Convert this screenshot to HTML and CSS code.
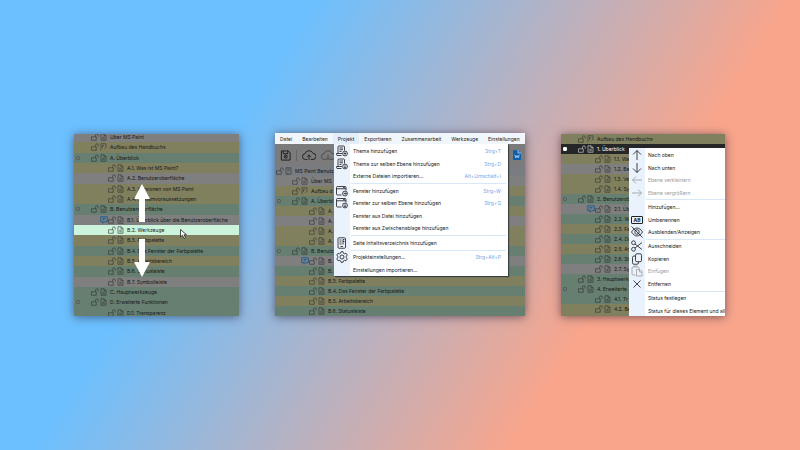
FILE: index.html
```html
<!DOCTYPE html>
<html lang="de">
<head>
<meta charset="utf-8">
<meta name="viewport" content="width=device-width, initial-scale=1">
<title>MS Paint Benutzerhandbuch</title>
<link rel="stylesheet" href="styles.css">
</head>
<body>
<svg class="sprite" aria-hidden="true">
  <symbol id="lock" viewBox="0 0 16 16"><path d="M1 7.500h9.500v7H1zM9 7V4.500a2.800 2.800 0 0 1 5.600 0V7"/></symbol>
  <symbol id="doc" viewBox="0 0 14 16"><path d="M2 1.500h6.500l3.500 3.500v9.500H2zM8 2v3.500h4M4.500 8.500h5M4.500 11.500h5"/></symbol>
  <symbol id="page" viewBox="0 0 14 16"><path d="M2 14.500v-13h10v7l-3 3M5 5v5M5 5h3"/></symbol>
  <symbol id="book" viewBox="0 0 14 16"><path d="M2 1.500h10v13H2zM4.500 4h5M4.500 7h5M4.500 12h3"/></symbol>
  <symbol id="note" viewBox="0 0 16 16"><path d="M1.500 1.500h13v10H9l-3 3v-3H1.500zM5 5h6M5 8h4"/></symbol>
  <symbol id="topic" viewBox="0 0 24 24"><path d="M11 21H4a2.500 2.500 0 0 1-3-2.500V17h11M4 17V4a2 2 0 0 1 2-2h9a2 2 0 0 1 2 2v7M7 6h7M7 9.500h7M7 13h4"/><circle cx="18" cy="17" r="4.800"/><path d="M18 14.500v5M15.500 17h5"/></symbol>
  <symbol id="topic-level" viewBox="0 0 24 24"><path d="M11 21H4a2.500 2.500 0 0 1-3-2.500V17h11M4 17V4a2 2 0 0 1 2-2h9a2 2 0 0 1 2 2v7M7 6h7M7 9.500h7M7 13h4"/><circle cx="18" cy="17" r="4.800"/><path d="M18 14.500v5M16 17.500l2 2 2-2"/></symbol>
  <symbol id="window" viewBox="0 0 24 24"><path d="M11 20H3a2 2 0 0 1-2-2V5a2 2 0 0 1 2-2h15a2 2 0 0 1 2 2v6M1 7.500h19M14 5.300h4"/><circle cx="18" cy="17" r="4.800"/><path d="M15.500 17h5l-2-2M20.500 17l-2 2"/></symbol>
  <symbol id="window-level" viewBox="0 0 24 24"><path d="M11 20H3a2 2 0 0 1-2-2V5a2 2 0 0 1 2-2h15a2 2 0 0 1 2 2v6M1 7.500h19M14 5.300h4"/><circle cx="18" cy="17" r="4.800"/><path d="M18 14.500v5l-2-2M18 19.500l2-2"/></symbol>
  <symbol id="toc" viewBox="0 0 24 24"><rect x="4" y="1.500" width="15" height="21" rx="2"/><path d="M7 6h4M7 10h4M7 14h4M14 5v10M14 5h3M14 9h3M9 19h5"/></symbol>
  <symbol id="gear" viewBox="0 0 24 24"><path d="M10 1.500h4l1 3 2 1 3-1 2.500 3.500-2 2.500v3l2 2.500-2.500 3.500-3-1-2 1-1 3h-4l-1-3-2-1-3 1L1.500 16l2-2.500v-3l-2-2.500L4 4.500l3 1 2-1z"/><circle cx="12" cy="12" r="4"/></symbol>
  <symbol id="up" viewBox="0 0 24 24"><path d="M12 22V3M4 11l8-8 8 8"/></symbol>
  <symbol id="down" viewBox="0 0 24 24"><path d="M12 2v19M4 13l8 8 8-8"/></symbol>
  <symbol id="left" viewBox="0 0 24 24"><path d="M22 12H3M10 5l-7 7 7 7"/></symbol>
  <symbol id="right" viewBox="0 0 24 24"><path d="M2 12h19M14 5l7 7-7 7"/></symbol>
  <symbol id="hide" viewBox="0 0 24 24"><path d="M1 12c3-5 7-8 11-8s8 3 11 8c-3 5-7 8-11 8s-8-3-11-8zM1 1l22 22"/><circle cx="12" cy="12" r="4.500"/></symbol>
  <symbol id="cut" viewBox="0 0 24 24"><circle cx="5" cy="5.500" r="3.800"/><circle cx="5" cy="18.500" r="3.800"/><path d="M8 8l14 11M8 16L22 5"/></symbol>
  <symbol id="copy" viewBox="0 0 24 24"><rect x="9" y="1.500" width="12" height="16" rx="3"/><path d="M9 6H6a3 3 0 0 0-3 3v10.500a3 3 0 0 0 3 3h6a3 3 0 0 0 3-3v-2"/></symbol>
  <symbol id="paste" viewBox="0 0 24 24"><path d="M9 20H4a2 2 0 0 1-2-2V6a2 2 0 0 1 2-2h10a2 2 0 0 1 2 2v2M6 4V2h6v2M11 9h7l4 4v9H11zM17 9v5h5"/></symbol>
  <symbol id="cross" viewBox="0 0 24 24"><path d="M5 5l14 14M19 5L5 19"/></symbol>
  <symbol id="save" viewBox="0 0 24 24"><path d="M3 2h15l4 4v16H3zM7 2v6h10V2"/><circle cx="12.500" cy="14.500" r="3.500"/><path d="M12.500 12v4"/></symbol>
  <symbol id="cloud-up" viewBox="0 0 32 24"><path d="M12 21H8a6.500 6.500 0 0 1-1-13 9.500 9.500 0 0 1 18-1 7 7 0 0 1 0 14h-5M16 22V11M11.500 15l4.500-4.500 4.500 4.500"/></symbol>
  <symbol id="cloud-down" viewBox="0 0 32 24"><path d="M12 21H8a6.500 6.500 0 0 1-1-13 9.500 9.500 0 0 1 18-1 7 7 0 0 1 0 14h-5M16 10v11M11.500 17l4.500 4.500 4.500-4.500"/></symbol>
</svg>

<main class="stage">
  <section class="panel">
    <ul class="tree tree-drag">
      <li class="row l1 gray"><svg class="ic"><use href="#lock"/></svg><svg class="ic doc"><use href="#doc"/></svg><span>Über MS Paint</span></li>
      <li class="row l1 olive"><svg class="ic"><use href="#lock"/></svg><svg class="ic doc"><use href="#page"/></svg><span>Aufbau des Handbuchs</span></li>
      <li class="row l1 green"><button class="toggle" aria-label="Einklappen"></button><svg class="ic"><use href="#lock"/></svg><svg class="ic doc"><use href="#doc"/></svg><span>A. Überblick</span></li>
      <li class="row l2 olive"><svg class="ic"><use href="#lock"/></svg><svg class="ic doc"><use href="#doc"/></svg><span>A.1. Was ist MS Paint?</span></li>
      <li class="row l2 gray"><svg class="ic"><use href="#lock"/></svg><svg class="ic doc"><use href="#doc"/></svg><span>A.2. Benutzeroberfläche</span></li>
      <li class="row l2 olive"><svg class="ic"><use href="#lock"/></svg><svg class="ic doc"><use href="#doc"/></svg><span>A.3. Versionen von MS Paint</span></li>
      <li class="row l2 olive"><svg class="ic"><use href="#lock"/></svg><svg class="ic doc"><use href="#doc"/></svg><span>A.4. Systemvoraussetzungen</span></li>
      <li class="row l1 green"><button class="toggle" aria-label="Einklappen"></button><svg class="ic"><use href="#lock"/></svg><svg class="ic doc"><use href="#doc"/></svg><span>B. Benutzeroberfläche</span></li>
      <li class="row l2 noted gray"><svg class="ic note"><use href="#note"/></svg><svg class="ic"><use href="#lock"/></svg><svg class="ic doc"><use href="#doc"/></svg><span>B.1. Überblick über die Benutzeroberfläche</span></li>
      <li class="row l2 active"><svg class="ic"><use href="#lock"/></svg><svg class="ic doc"><use href="#doc"/></svg><span>B.2. Werkzeuge</span></li>
      <li class="row l2 olive"><svg class="ic"><use href="#lock"/></svg><svg class="ic doc"><use href="#doc"/></svg><span>B.3. Farbpalette</span></li>
      <li class="row l2 green"><svg class="ic"><use href="#lock"/></svg><svg class="ic doc"><use href="#doc"/></svg><span>B.4. Das Fenster der Farbpalette</span></li>
      <li class="row l2 olive"><svg class="ic"><use href="#lock"/></svg><svg class="ic doc"><use href="#doc"/></svg><span>B.5. Arbeitsbereich</span></li>
      <li class="row l2 green"><svg class="ic"><use href="#lock"/></svg><svg class="ic doc"><use href="#doc"/></svg><span>B.6. Statusleiste</span></li>
      <li class="row l2 gray"><svg class="ic"><use href="#lock"/></svg><svg class="ic doc"><use href="#doc"/></svg><span>B.7. Symbolleiste</span></li>
      <li class="row l1 green"><svg class="ic"><use href="#lock"/></svg><svg class="ic doc"><use href="#doc"/></svg><span>C. Hauptwerkzeuge</span></li>
      <li class="row l1 green"><button class="toggle" aria-label="Einklappen"></button><svg class="ic"><use href="#lock"/></svg><svg class="ic doc"><use href="#doc"/></svg><span>D. Erweiterte Funktionen</span></li>
      <li class="row l2 green"><svg class="ic"><use href="#lock"/></svg><svg class="ic doc"><use href="#doc"/></svg><span>D.1. Transparenz</span></li>
    </ul>
    <svg class="arrow arrow-up" viewBox="0 0 16 38"><path d="M8 0l8 15h-5v23H5V15H0z"/></svg>
    <svg class="arrow arrow-down" viewBox="0 0 16 38"><path d="M5 0h6v23h5L8 38 0 23h5z"/></svg>
    <svg class="cursor" viewBox="0 0 14 20"><path d="M1 1v15l4-3.500 3 6.500 3-1.500-3-6h5z"/></svg>
  </section>

  <section class="panel panel-main">
    <nav class="menubar">
      <button>Datei</button><button>Bearbeiten</button><button class="open">Projekt</button><button>Exportieren</button><button>Zusammenarbeit</button><button>Werkzeuge</button><button>Einstellungen</button>
    </nav>
    <div class="toolbar">
      <button class="tool" aria-label="Speichern"><svg><use href="#save"/></svg></button>
      <span class="divider"></span>
      <button class="tool wide" aria-label="Hochladen"><svg><use href="#cloud-up"/></svg></button>
      <button class="tool wide faint" aria-label="Herunterladen"><svg><use href="#cloud-down"/></svg></button>
      <button class="tool word" aria-label="Word"><svg viewBox="0 0 16 20"><path class="sheet" d="M2 0h8l6 6v12a2 2 0 0 1-2 2H2a2 2 0 0 1-2-2V2a2 2 0 0 1 2-2z"/><path class="mark" d="M10 0v6h6M3.500 9.500l2 6.500L8 11l2.500 5 2-6.500"/></svg></button>
    </div>
    <ul class="tree">
      <li class="row l0 slate"><svg class="ic"><use href="#lock"/></svg><svg class="ic doc"><use href="#book"/></svg><span>MS Paint Benutz</span></li>
      <li class="row l1 gray"><svg class="ic"><use href="#lock"/></svg><svg class="ic doc"><use href="#doc"/></svg><span>Über MS</span></li>
      <li class="row l1 olive"><svg class="ic"><use href="#lock"/></svg><svg class="ic doc"><use href="#page"/></svg><span>Aufbau d</span></li>
      <li class="row l1 green"><button class="toggle" aria-label="Einklappen"></button><svg class="ic"><use href="#lock"/></svg><svg class="ic doc"><use href="#doc"/></svg><span>A. Überbl</span></li>
      <li class="row l2 olive"><svg class="ic"><use href="#lock"/></svg><svg class="ic doc"><use href="#doc"/></svg><span>A.</span></li>
      <li class="row l2 gray"><svg class="ic"><use href="#lock"/></svg><svg class="ic doc"><use href="#doc"/></svg><span>A.</span></li>
      <li class="row l2 olive"><svg class="ic"><use href="#lock"/></svg><svg class="ic doc"><use href="#doc"/></svg><span>A.</span></li>
      <li class="row l2 olive"><svg class="ic"><use href="#lock"/></svg><svg class="ic doc"><use href="#doc"/></svg><span>A.</span></li>
      <li class="row l1 green"><button class="toggle" aria-label="Einklappen"></button><svg class="ic"><use href="#lock"/></svg><svg class="ic doc"><use href="#doc"/></svg><span>B. Benutz</span></li>
      <li class="row l2 noted gray"><svg class="ic note"><use href="#note"/></svg><svg class="ic"><use href="#lock"/></svg><svg class="ic doc"><use href="#doc"/></svg><span>B.</span></li>
      <li class="row l2 green"><svg class="ic"><use href="#lock"/></svg><svg class="ic doc"><use href="#doc"/></svg><span>B.</span></li>
      <li class="row l2 olive"><svg class="ic"><use href="#lock"/></svg><svg class="ic doc"><use href="#doc"/></svg><span>B.3. Farbpalette</span></li>
      <li class="row l2 green"><svg class="ic"><use href="#lock"/></svg><svg class="ic doc"><use href="#doc"/></svg><span>B.4. Das Fenster der Farbpalette</span></li>
      <li class="row l2 olive"><svg class="ic"><use href="#lock"/></svg><svg class="ic doc"><use href="#doc"/></svg><span>B.5. Arbeitsbereich</span></li>
      <li class="row l2 green"><svg class="ic"><use href="#lock"/></svg><svg class="ic doc"><use href="#doc"/></svg><span>B.6. Statusleiste</span></li>
    </ul>
    <div class="menu menu-project">
      <button class="item"><svg class="mi"><use href="#topic"/></svg><span>Thema hinzufügen</span><kbd>Strg+T</kbd></button>
      <button class="item"><svg class="mi"><use href="#topic-level"/></svg><span>Thema zur selben Ebene hinzufügen</span><kbd>Strg+D</kbd></button>
      <button class="item"><span>Externe Dateien importieren...</span><kbd>Alt+Umschalt+I</kbd></button>
      <hr>
      <button class="item"><svg class="mi"><use href="#window"/></svg><span>Fenster hinzufügen</span><kbd>Strg+W</kbd></button>
      <button class="item"><svg class="mi"><use href="#window-level"/></svg><span>Fenster zur selben Ebene hinzufügen</span><kbd>Strg+Q</kbd></button>
      <button class="item"><span>Fenster aus Datei hinzufügen</span></button>
      <button class="item"><span>Fenster aus Zwischenablage hinzufügen</span></button>
      <hr>
      <button class="item"><svg class="mi"><use href="#toc"/></svg><span>Seite Inhaltsverzeichnis hinzufügen</span></button>
      <hr>
      <button class="item"><svg class="mi"><use href="#gear"/></svg><span>Projekteinstellungen...</span><kbd>Strg+Alt+P</kbd></button>
      <button class="item"><span>Einstellungen importieren...</span></button>
    </div>
  </section>

  <section class="panel panel-context">
    <ul class="tree">
      <li class="row l1 olive"><svg class="ic"><use href="#lock"/></svg><svg class="ic doc"><use href="#page"/></svg><span>Aufbau des Handbuchs</span></li>
      <li class="row l1 selected"><button class="toggle" aria-label="Einklappen"></button><svg class="ic"><use href="#lock"/></svg><svg class="ic doc"><use href="#doc"/></svg><span>1. Überblick</span></li>
      <li class="row l2 olive"><svg class="ic"><use href="#lock"/></svg><svg class="ic doc"><use href="#doc"/></svg><span>1.1. Wa</span></li>
      <li class="row l2 gray"><svg class="ic"><use href="#lock"/></svg><svg class="ic doc"><use href="#doc"/></svg><span>1.2. Be</span></li>
      <li class="row l2 olive"><svg class="ic"><use href="#lock"/></svg><svg class="ic doc"><use href="#doc"/></svg><span>1.3. Ve</span></li>
      <li class="row l2 olive"><svg class="ic"><use href="#lock"/></svg><svg class="ic doc"><use href="#doc"/></svg><span>1.4. Sy</span></li>
      <li class="row l1 green"><button class="toggle" aria-label="Einklappen"></button><svg class="ic"><use href="#lock"/></svg><svg class="ic doc"><use href="#doc"/></svg><span>2. Benutzerob</span></li>
      <li class="row l2 noted gray"><svg class="ic note"><use href="#note"/></svg><svg class="ic"><use href="#lock"/></svg><svg class="ic doc"><use href="#doc"/></svg><span>2.1. Üb</span></li>
      <li class="row l2 green"><svg class="ic"><use href="#lock"/></svg><svg class="ic doc"><use href="#doc"/></svg><span>2.2. W</span></li>
      <li class="row l2 olive"><svg class="ic"><use href="#lock"/></svg><svg class="ic doc"><use href="#doc"/></svg><span>2.3. Fa</span></li>
      <li class="row l2 green"><svg class="ic"><use href="#lock"/></svg><svg class="ic doc"><use href="#doc"/></svg><span>2.4. Da</span></li>
      <li class="row l2 olive"><svg class="ic"><use href="#lock"/></svg><svg class="ic doc"><use href="#doc"/></svg><span>2.5. Ar</span></li>
      <li class="row l2 green"><svg class="ic"><use href="#lock"/></svg><svg class="ic doc"><use href="#doc"/></svg><span>2.6. St</span></li>
      <li class="row l2 gray"><svg class="ic"><use href="#lock"/></svg><svg class="ic doc"><use href="#doc"/></svg><span>2.7. Sy</span></li>
      <li class="row l1 green"><svg class="ic"><use href="#lock"/></svg><svg class="ic doc"><use href="#doc"/></svg><span>3. Hauptwerk</span></li>
      <li class="row l1 green"><button class="toggle" aria-label="Einklappen"></button><svg class="ic"><use href="#lock"/></svg><svg class="ic doc"><use href="#doc"/></svg><span>4. Erweiterte</span></li>
      <li class="row l2 green"><svg class="ic"><use href="#lock"/></svg><svg class="ic doc"><use href="#doc"/></svg><span>4.1. Tr</span></li>
      <li class="row l2 olive"><svg class="ic"><use href="#lock"/></svg><svg class="ic doc"><use href="#doc"/></svg><span>4.2. Be</span></li>
    </ul>
    <div class="menu menu-context">
      <button class="item"><svg class="mi"><use href="#up"/></svg><span>Nach oben</span></button>
      <button class="item"><svg class="mi"><use href="#down"/></svg><span>Nach unten</span></button>
      <button class="item" disabled><svg class="mi"><use href="#left"/></svg><span>Ebene verkleinern</span></button>
      <button class="item" disabled><svg class="mi"><use href="#right"/></svg><span>Ebene vergrößern</span></button>
      <hr>
      <button class="item"><span>Hinzufügen...</span></button>
      <button class="item"><span class="mi rename">AB</span><span>Umbenennen</span></button>
      <button class="item"><svg class="mi"><use href="#hide"/></svg><span>Ausblenden/Anzeigen</span></button>
      <hr>
      <button class="item"><svg class="mi"><use href="#cut"/></svg><span>Ausschneiden</span></button>
      <button class="item"><svg class="mi"><use href="#copy"/></svg><span>Kopieren</span></button>
      <button class="item" disabled><svg class="mi"><use href="#paste"/></svg><span>Einfügen</span></button>
      <button class="item"><svg class="mi"><use href="#cross"/></svg><span>Entfernen</span></button>
      <hr>
      <button class="item"><span>Status festlegen</span></button>
      <button class="item"><span>Status für dieses Element und all</span></button>
    </div>
  </section>
</main>
</body>
</html>
```
FILE: styles.css
```css
* { box-sizing: border-box; }

body {
  margin: 0;
  font: 5px/8px Inter, "Noto Sans", sans-serif;
  color: #181818;
  background: linear-gradient(122deg, #6cc0ff 29%, #f8a58c 73%) fixed;
}

button {
  margin: 0;
  padding: 0;
  border: 0;
  background: none;
  color: inherit;
  font: inherit;
  text-align: left;
}

svg { fill: none; stroke: currentColor; }

.sprite { position: absolute; width: 0; height: 0; }

.stage {
  display: grid;
  grid-template-columns: 165fr 250fr 164fr;
  gap: 36px;
  align-content: center;
  align-items: end;
  min-height: 100vh;
  padding: 0 75px 0 74px;
}

.panel {
  position: relative;
  height: 182px;
  overflow: hidden;
  background: #7e7e7e;
  box-shadow: 0 1px 9px rgba(40, 30, 50, .6);
}

.panel-main { height: 183px; margin-top: -1px; }
.panel-context { background: #80805f; }

/* Topic tree */
.tree {
  display: grid;
  grid-auto-rows: 10px;
  margin: 0;
  padding: 0;
  list-style: none;
}

.tree-drag {
  grid-auto-rows: 1fr;
  height: 186px;
  margin-top: -2px;
}

.row {
  display: flex;
  align-items: center;
  min-width: 0;
  white-space: nowrap;
}

.l0 { padding-left: 1px; }
.l1 { padding-left: 17px; }
.l2 { padding-left: 34px; }
.l2.noted { padding-left: 26px; }

.gray { background: #7f7f7f; }
.slate { background: #797c81; }
.olive { background: #80805f; }
.green { background: #667f70; }
.active { background: #ccf4dc; }
.selected { background: #252628; color: #fff; }

.ic { width: 8px; height: 8px; flex: none; color: #333; stroke-width: 1.2; }
.ic.doc { width: 7px; margin: 0 3px 0 1px; }
.ic.note { color: #215f91; stroke-width: 2; }
.selected .ic { color: #ddd; }

.toggle {
  width: 4px;
  height: 4px;
  margin: 0 11px 0 -15px;
  border: 1px solid #58605d;
  border-radius: 1px;
  background: #707877;
}
.selected .toggle { border-color: #fff; background: #fff; }

/* Drag hints */
.arrow { position: absolute; left: 60px; width: 16px; height: 38px; fill: #fff; stroke: none; }
.arrow-up { top: 50px; }
.arrow-down { top: 105px; }
.cursor {
  position: absolute;
  left: 106px;
  top: 95px;
  width: 7px;
  height: 10px;
  fill: #fff;
  stroke: #222;
  stroke-width: 1.6;
}

/* Application bars */
.menubar { display: flex; height: 11px; background: #f1f6fd; }
.menubar button { padding: 0 5px; white-space: nowrap; }
.menubar .open { background: #e4eefb; }

.toolbar {
  display: flex;
  align-items: center;
  gap: 5px;
  height: 22px;
  padding: 0 4px 0 5px;
  background: #7b7b7b;
}
.tool { display: flex; width: 11px; height: 11px; }
.tool svg { width: 100%; height: 100%; stroke-width: 2; }
.tool.wide { width: 14px; }
.tool.faint { color: #484848; }
.tool.word { width: 8px; height: 10px; margin-left: auto; }
.sheet { fill: #0c5fae; stroke: none; }
.mark { stroke: #a4c4e0; }
.divider { width: 1px; height: 11px; background: #656565; }

/* Menus */
.menu {
  position: absolute;
  display: grid;
  padding-top: 1px;
  background: linear-gradient(90deg, #eaf2fe 16px, #fff 16px);
}
.menu-project {
  left: 59px;
  top: 11px;
  width: 174px;
  height: 132px;
  grid-template-rows: repeat(3, 25fr) 4fr repeat(4, 25fr) 4fr 25fr 4fr repeat(2, 25fr);
  box-shadow: 1px 1px 1px #3a3f40;
}
.menu-context {
  left: 68px;
  right: 0;
  top: 14px;
  height: 169px;
  grid-template-rows: repeat(4, 25fr) 4fr repeat(3, 25fr) 4fr repeat(4, 25fr) 4fr repeat(2, 25fr);
}

.item {
  display: grid;
  grid-template-columns: 12px 1fr auto;
  column-gap: 5px;
  align-items: center;
  min-height: 0;
  padding: 0 7px 0 2px;
  white-space: nowrap;
}
.menu-context .item { padding-right: 0; }
.item > span { grid-column: 2; }
.item > .mi { grid-column: 1; grid-row: 1; width: 12px; height: 12px; stroke-width: 1.6; }
.item:disabled { color: #9a9a9a; }
.item > .rename {
  height: 8px;
  border: 1px solid #222;
  border-radius: 1px;
  line-height: 6px;
  font-weight: 700;
  text-align: center;
}
.item kbd { font: inherit; color: #78a6e8; }

hr {
  align-self: center;
  width: auto;
  height: 1px;
  margin: 0 2px 0 17px;
  border: 0;
  background: #d8e8f8;
}
.menu-context hr { margin-right: 0; }
```
